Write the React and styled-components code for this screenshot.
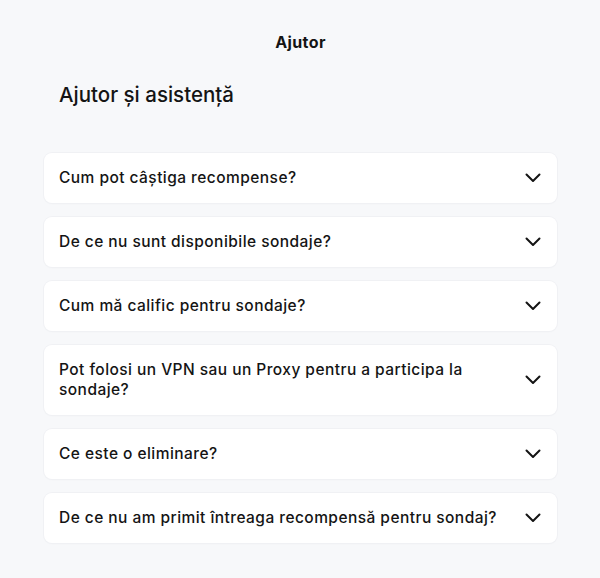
import React from 'react';
import styled, { createGlobalStyle } from 'styled-components';

const GlobalStyle = createGlobalStyle`
  html, body {
    margin: 0;
    padding: 0;
    background: #f7f8fa;
  }
  body {
    font-family: Inter, "Noto Sans", sans-serif;
    color: #141414;
  }
`;

const Page = styled.div`
  display: flex;
  flex-direction: column;
  padding: 0 43px 36px 44px;
`;

const TopBar = styled.div`
  display: flex;
  justify-content: center;
  padding-top: 32px;
  font-size: 16px;
  font-weight: 700;
  line-height: 20px;
  letter-spacing: 0.4px;
`;

const Heading = styled.h1`
  margin: 30px 0 0 15px;
  font-size: 20.5px;
  font-weight: 500;
  line-height: 26px;
  letter-spacing: 0;
`;

const List = styled.div`
  display: flex;
  flex-direction: column;
  gap: 14px;
  margin-top: 45px;
`;

const Card = styled.div`
  display: flex;
  align-items: center;
  justify-content: space-between;
  gap: 14px;
  padding: 15px 16px 15px 15px;
  background: #ffffff;
  border-radius: 8px;
  box-shadow: 0 0 0 1px #f0f1f4, 0 1px 2px rgba(20, 30, 50, 0.03);
  cursor: pointer;
`;

const Question = styled.span`
  flex: 1;
  font-size: 15.5px;
  font-weight: 500;
  line-height: 20px;
  letter-spacing: 0.45px;
  max-width: 460px;
`;

const Chevron = () => (
  <svg width="16" height="10" viewBox="0 0 16 10" fill="none">
    <polyline
      points="1.5,1.5 8,8 14.5,1.5"
      stroke="#141414"
      strokeWidth="2"
      strokeLinecap="round"
      strokeLinejoin="round"
    />
  </svg>
);

const questions = [
  'Cum pot câștiga recompense?',
  'De ce nu sunt disponibile sondaje?',
  'Cum mă calific pentru sondaje?',
  'Pot folosi un VPN sau un Proxy pentru a participa la sondaje?',
  'Ce este o eliminare?',
  'De ce nu am primit întreaga recompensă pentru sondaj?',
];

const App = () => (
  <>
    <GlobalStyle />
    <Page>
      <TopBar>Ajutor</TopBar>
      <Heading>Ajutor și asistență</Heading>
      <List>
        {questions.map(q => (
          <Card key={q}>
            <Question>{q}</Question>
            <Chevron />
          </Card>
        ))}
      </List>
    </Page>
  </>
);

export default App;
